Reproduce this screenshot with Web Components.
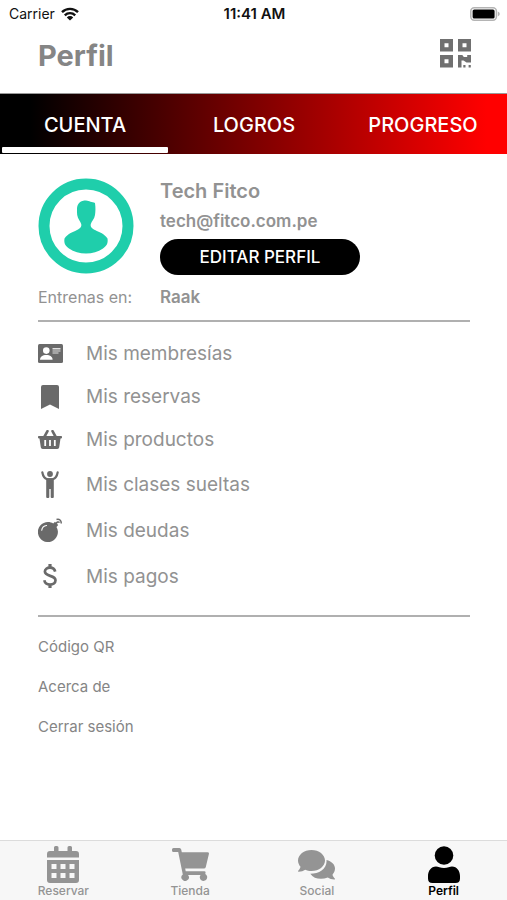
<!DOCTYPE html>
<html lang="es">
<head>
<meta charset="utf-8">
<meta name="viewport" content="width=device-width, initial-scale=1">
<title>Perfil</title>
<style>
  html, body { margin: 0; height: 100%; }
  body { background: #fff; font-family: Inter, "Liberation Sans", sans-serif; color: #929292; }
</style>
</head>
<body>
<profile-app></profile-app>
<script>
const ICONS = {
  wifi: ['0 0 18 14', '<g fill="none" stroke="currentColor" stroke-width="2.4"><path d="M1 5.2a11.3 11.3 0 0 1 16 0"/><path d="M3.8 8.3a7.4 7.4 0 0 1 10.4 0"/></g><path d="M9 13.6 5.8 10.4a4.6 4.6 0 0 1 6.4 0z"/>'],
  battery: ['0 0 30 14', '<rect x=".8" y=".8" width="25.6" height="12.4" rx="3.4" fill="#fff" stroke="#b4b4b4" stroke-width="1.5"/><rect x="2.6" y="2.4" width="22" height="9.2" rx="1.6" fill="#000"/><path d="M27.8 4.6v4.8q2-.9 2-2.4t-2-2.4z" fill="#b4b4b4"/>'],
  qr: ['0 0 31 29', '<path fill-rule="evenodd" d="M0 0h13v12.500H0zM4.500 4.300v4h4v-4zM18 0h13v12.500H18zM22.500 4.300v4h4v-4zM0 16h13v12.500H0zM4.500 20.300v4h4v-4z"/><path d="M18 16h4.300l1.500 2h3.400v-2H31v7.500h-4.500l-3-2h-2v7H18zM23.300 26h2.200v2.400h-2.200zM28.600 26h2.200v2.400h-2.200z"/>'],
  avatar: ['0 0 96 96', '<circle cx="48" cy="48" r="42" fill="#fff" stroke="#1fceab" stroke-width="11"/><path fill="#1fceab" d="M39 31c0-6 4-8.500 9-8.500 2 0 3 .8 4.500 1.200 1.500.5 3 .3 4.500 1.300.7 5 .5 8 0 12-.5 4-3.500 6.500-4.200 9-.7 3 1.200 4.500 4.200 6 5 2.500 9 3.500 12.500 8.500.8 5-1 7.500-4.500 10C60 74 54.500 75.500 48 75.500S36 74 31 70.500c-3.500-2.500-5.300-5-4.500-10 3.500-5 7.500-6 12.500-8.500 3-1.500 4.900-3 4.200-6-.7-2.500-3.400-5-4-9-.3-2-.2-4-.2-6z"/>'],
  card: ['0 0 25 19', '<rect width="25" height="19" rx="1.500"/><g fill="#fff"><circle cx="8.300" cy="6.600" r="3.300"/><path d="M2 15.700c0-3 2.500-4.700 6.300-4.700s6.300 1.700 6.300 4.700z"/><path d="M14.500 4h8v1.500h-8zM14.500 6.600h8v1h-8zM14.500 8.600h6v1h-6z" opacity=".8"/></g>'],
  bookmark: ['0 0 18 24', '<path d="M2 0h14q2 0 2 2v22l-9-4.600L0 24V2q0-2 2-2z"/>'],
  basket: ['0 0 24 19', '<path d="M6.300 7 9.500 1.200M17.700 7l-3.200-5.800" fill="none" stroke="currentColor" stroke-width="2.600" stroke-linecap="round"/><path fill-rule="evenodd" d="M.8 6h22.400q.8 0 .8.800v.8q0 .8-.8.800h-.7l-1.300 8.900q-.2 1.700-1.900 1.700H4.700q-1.700 0-1.900-1.700L1.500 8.400H.8Q0 8.400 0 7.600v-.8Q0 6 .8 6zM6.300 10v6h1.800v-6zM11.100 10v6h1.800v-6zM15.900 10v6h1.800v-6z"/>'],
  person: ['0 0 18 27', '<circle cx="9" cy="3" r="2.900"/><path d="M1.300 1.300C2 5.500 3.500 7.600 6.500 8.300h5c3-.7 4.500-2.800 5.200-7" fill="none" stroke="currentColor" stroke-width="2.200" stroke-linecap="round"/><path d="M5.200 7.300h7.600V26q0 1-1 1h-1.100q-1 0-1-1v-8H8.300v8q0 1-1 1H6.200q-1 0-1-1z"/>'],
  bomb: ['0 0 24 24', '<path fill-rule="evenodd" d="M10 4c2 0 3.700.5 5.200 1.500L17 3.800l3.200 3.300-1.700 1.800A10 10 0 1 1 10 4zM8.500 7C5.500 7.300 3.500 9.300 3.200 12.200c0 .8 1 .8 1.100 0 .4-2.400 1.900-3.800 4.200-4.100.9-.1.800-1.200 0-1.100z"/><path d="M18.300 5.800c.2-1.800 2.200-2.400 3.300-1.200M18.500 1.500c2.800-1 5 1 4.700 4" fill="none" stroke="currentColor" stroke-width="1.500"/>'],
  dollar: ['0 0 14 24', '<path d="M7 0v4M7 20v4" fill="none" stroke="currentColor" stroke-width="3.200"/><path d="M12.200 7.600C11.600 5 9.600 3.600 7 3.600c-3 0-5.100 1.600-5.100 4 0 5.500 10.600 3 10.600 8.700 0 2.500-2.300 4.200-5.500 4.200-3 0-5.200-1.600-5.700-4.300" fill="none" stroke="currentColor" stroke-width="2.700"/>'],
  calendar: ['0 0 32 37', '<path d="M0 11.500V8q0-3 3-3h4V1.500Q7 0 8.500 0H10q1.500 0 1.500 1.500V5h9V1.500Q20.500 0 22 0h1.500Q25 0 25 1.500V5h4q3 0 3 3v3.500z"/><path fill-rule="evenodd" d="M0 14h32v20q0 3-3 3H3q-3 0-3-3zM4.500 18v5h5v-5zM13.500 18v5h5v-5zM22.500 18v5h5v-5zM4.500 27v5h5v-5zM13.500 27v5h5v-5zM22.500 27v5h5v-5z"/>'],
  cart: ['0 0 37 33', '<path d="M1.500 0h6q1.300 0 1.700 1.500l.6 2.700h25.700q1.800 0 1.400 1.700L33.800 19q-.4 1.500-1.900 1.500H13.200l.5 2.700h18.600q1.600 0 1.200 1.600l-.2 1.200a3.700 3.700 0 1 1-4.700.9H16a3.700 3.700 0 1 1-5.200-.5L6.200 4H1.500Q0 4 0 2.500v-1Q0 0 1.500 0z"/>'],
  chat: ['0 0 37 30', '<path d="M28.500 10c5 1.200 8.500 4.500 8.500 8.500 0 2.500-1.200 4.500-2.500 6.200.4 1.600 1.300 2.800 2.300 3.800.3.500.1 1-.5 1-2.500 0-4.800-.8-6.500-2-6.500 2.600-14 1.500-17.500-3.800 9 0 17-5 16.200-13.700z"/><path d="M13.500 0C21 0 27 4.700 27 10.500S21 21 13.500 21c-2.300 0-4.500-.4-6.300-1.200-1.800 1.200-4 2-6.600 2-.6 0-.8-.6-.4-1 1-1 1.900-2.400 2.300-4C1 15 0 12.900 0 10.500 0 4.700 6 0 13.500 0z"/>'],
  user: ['0 0 32 37', '<circle cx="16" cy="9.500" r="9.300"/><path d="M8 20.500c2 .2 4.500 1.500 8 1.500s6-1.300 8-1.500c5 0 8 4.500 8 9.500v2.500q0 4.500-4.500 4.500h-23Q0 37 0 32.500V30c0-5 3-9.500 8-9.500z"/>']
};

function define(name, render) {
  customElements.define(name, class extends HTMLElement {
    connectedCallback() {
      if (this.shadowRoot) return;
      this.attachShadow({ mode: 'open' }).innerHTML = render(this);
    }
  });
}

define('app-icon', el => {
  const [box, body] = ICONS[el.getAttribute('name')];
  const [, , w, h] = box.split(' ');
  return `<style>:host{display:block;flex:none}svg{display:block}</style>
  <svg width="${w}" height="${h}" viewBox="${box}" fill="currentColor" aria-hidden="true">${body}</svg>`;
});

define('status-bar', () => `
<style>
  :host { display: grid; grid-template-columns: 1fr auto 1fr; align-items: center; height: 27px; padding: 0 7px 0 9px; color: #111; font-size: 14px; }
  .left { display: flex; align-items: center; gap: 6px; }
  .time { font-size: 15px; font-weight: 600; }
  .right { justify-self: end; }
</style>
<div class="left"><span>Carrier</span><app-icon name="wifi"></app-icon></div>
<span class="time">11:41 AM</span>
<app-icon class="right" name="battery"></app-icon>`);

define('page-header', () => `
<style>
  :host { display: flex; justify-content: space-between; align-items: center; height: 57px; padding: 0 36px 0 38px; }
  h1 { margin: 0; font-size: 29px; font-weight: 700; color: #858585; }
  button { border: 0; padding: 0 0 4px; background: none; color: #707070; }
</style>
<h1><slot></slot></h1>
<button aria-label="Mostrar código QR"><app-icon name="qr"></app-icon></button>`);

define('tab-strip', () => `
<style>
  :host { display: grid; grid-template-columns: repeat(3, 1fr); height: 61px; background: linear-gradient(90deg, #000 6%, #f00 96%); border-top: 1px solid #999; box-sizing: border-box; }
</style><slot></slot>`);

define('tab-item', el => `
<style>
  :host { display: flex; flex-direction: column; padding: 0 1px 1px 2px; }
  button { flex: 1; border: 0; padding: 8px 0 0; background: none; color: #fff; font: 500 20px Inter, sans-serif; white-space: nowrap; }
  i { height: 6px; border-radius: 1px; background: ${el.hasAttribute('selected') ? '#fff' : 'transparent'}; }
</style>
<button role="tab" aria-selected="${el.hasAttribute('selected')}"><slot></slot></button><i></i>`);

define('profile-card', () => `
<style>
  :host { display: grid; grid-template-columns: 96px minmax(0, 1fr); column-gap: 26px; padding: 23px 0 13px; border-bottom: 2px solid #b0b0b0; }
  .avatar { align-self: center; }
  .info { display: flex; flex-direction: column; align-items: flex-start; }
  .name { font-size: 20px; line-height: 28px; font-weight: 600; }
  .mail { font-size: 17px; line-height: 32px; font-weight: 600; }
  button { width: 200px; height: 36px; margin-top: 2px; border: 0; border-radius: 18px; background: #000; color: #fff; font: 500 17px Inter, sans-serif; }
  .gym { padding-top: 12px; font-size: 16px; line-height: 20px; white-space: nowrap; }
  b.gym { font-size: 17px; font-weight: 600; }
</style>
<app-icon class="avatar" name="avatar"></app-icon>
<div class="info"><span class="name">Tech Fitco</span><span class="mail">tech@fitco.com.pe</span><button>EDITAR PERFIL</button></div>
<span class="gym">Entrenas en:</span><b class="gym">Raak</b>`);

define('menu-row', el => `
<style>
  :host { display: block; font-size: 19px; }
  a { display: flex; align-items: center; gap: 24px; height: 43px; color: #929292; text-decoration: none; }
  :host([tall]) a { height: 46px; }
  span { display: grid; place-items: center; width: 24px; color: #6a6a6a; }
</style>
<a href="#"><span><app-icon name="${el.getAttribute('icon')}"></app-icon></span><slot></slot></a>`);

define('menu-list', () => `
<style>:host { display: block; padding: 10px 0 16px; border-bottom: 2px solid #b0b0b0; }</style><slot></slot>`);

define('text-link', () => `
<style>
  :host { display: block; font-size: 15px; }
  a { display: flex; align-items: center; height: 40px; color: #858585; text-decoration: none; }
</style><a href="#"><slot></slot></a>`);

define('nav-bar', () => `
<style>:host { display: grid; grid-template-columns: repeat(4, 1fr); flex: none; background: #f7f7f7; border-top: 1px solid #dcdcdc; }</style><slot></slot>`);

define('nav-item', el => `
<style>
  :host { display: block; color: #949494; }
  :host([selected]) { color: #000; }
  a { display: flex; flex-direction: column; align-items: center; padding: 5px 0 1px; color: inherit; text-decoration: none; font-size: 12px; line-height: 16px; font-weight: 500; }
  :host([selected]) a { font-weight: 600; }
  span { display: grid; place-items: center; height: 37px; }
</style>
<a href="#"><span><app-icon name="${el.getAttribute('icon')}"></app-icon></span><slot></slot></a>`);

define('profile-app', () => `
<style>
  :host { display: flex; flex-direction: column; min-height: 100vh; }
  header { padding-bottom: 9px; }
  main { flex: 1; padding: 0 37px 0 38px; }
  .links { padding-top: 9px; }
</style>
<header><status-bar></status-bar><page-header>Perfil</page-header></header>
<tab-strip role="tablist"><tab-item selected>CUENTA</tab-item><tab-item>LOGROS</tab-item><tab-item>PROGRESO</tab-item></tab-strip>
<main>
  <profile-card></profile-card>
  <menu-list>
    <menu-row icon="card">Mis membresías</menu-row>
    <menu-row icon="bookmark">Mis reservas</menu-row>
    <menu-row icon="basket">Mis productos</menu-row>
    <menu-row icon="person" tall>Mis clases sueltas</menu-row>
    <menu-row icon="bomb" tall>Mis deudas</menu-row>
    <menu-row icon="dollar" tall>Mis pagos</menu-row>
  </menu-list>
  <div class="links"><text-link>Código QR</text-link><text-link>Acerca de</text-link><text-link>Cerrar sesión</text-link></div>
</main>
<nav-bar role="navigation">
  <nav-item icon="calendar">Reservar</nav-item>
  <nav-item icon="cart">Tienda</nav-item>
  <nav-item icon="chat">Social</nav-item>
  <nav-item icon="user" selected>Perfil</nav-item>
</nav-bar>`);
</script>
</body>
</html>
